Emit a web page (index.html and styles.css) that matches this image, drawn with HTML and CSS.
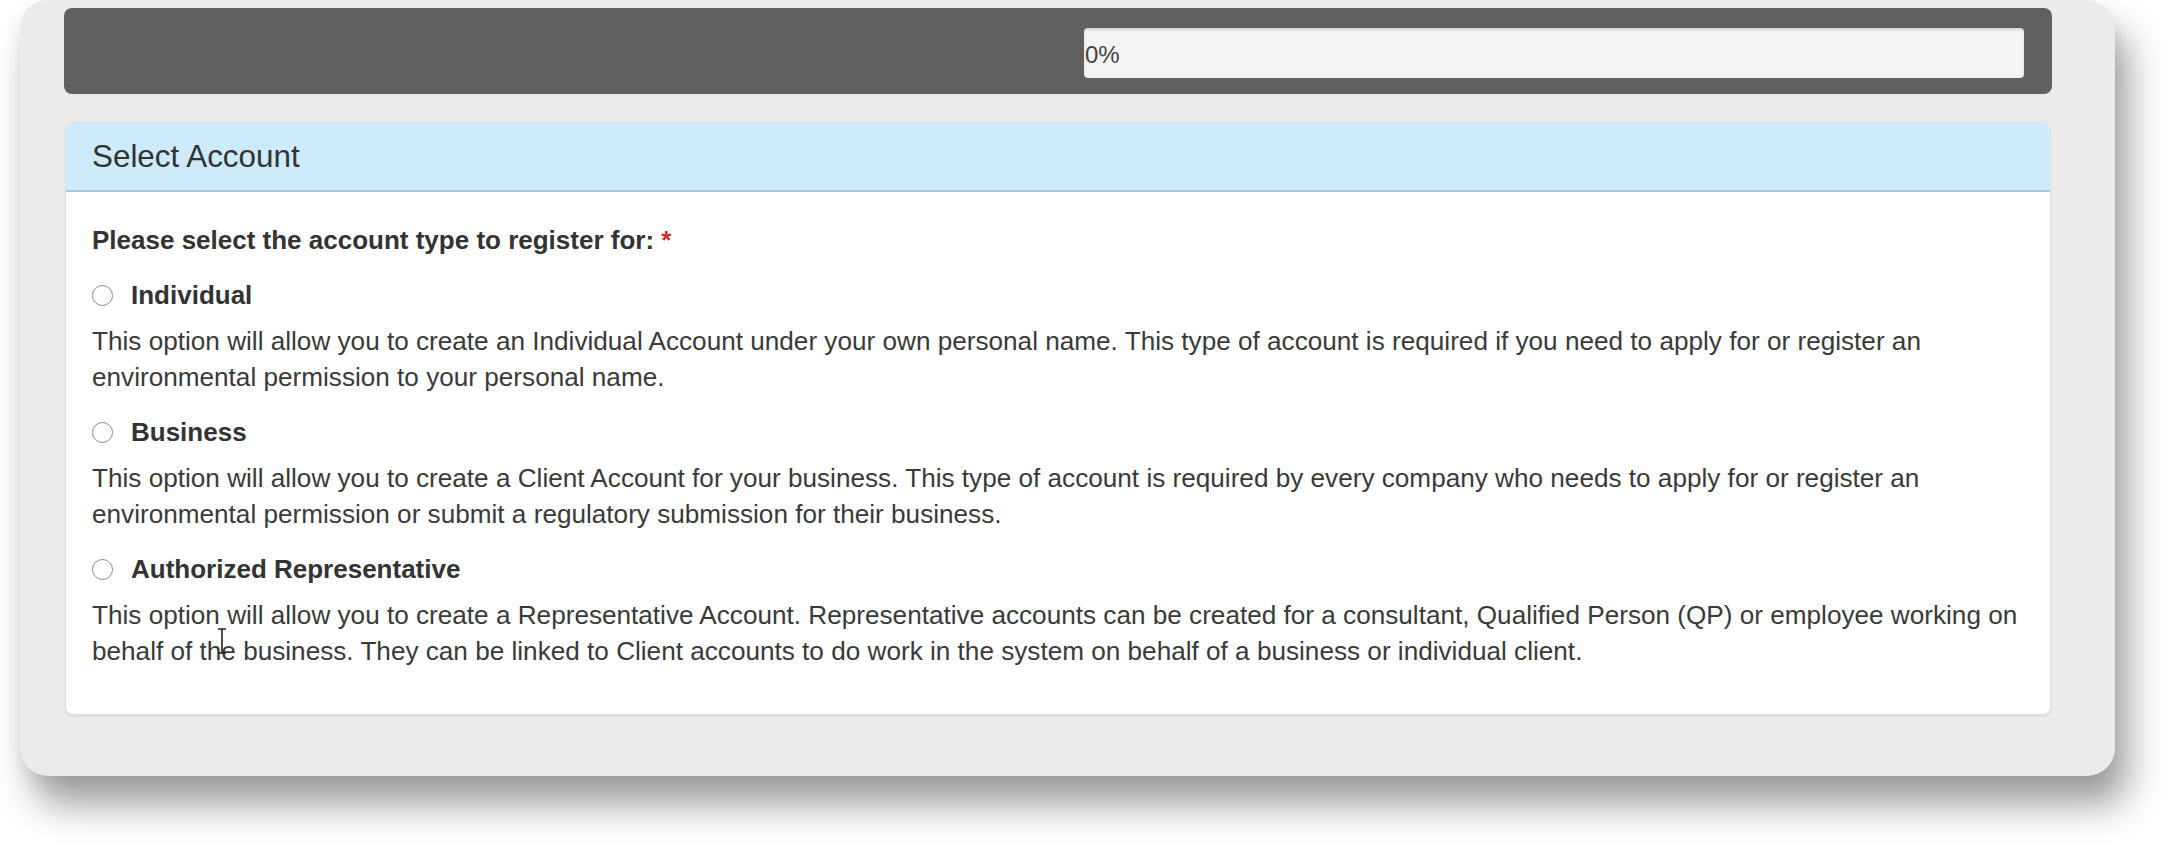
FILE: index.html
```html
<!DOCTYPE html>
<html lang="en">
<head>
<meta charset="utf-8">
<title>Select Account</title>
<link rel="stylesheet" href="styles.css">
</head>
<body>
<div class="page">
<div class="screen">
  <div class="topbar">
    <div class="progress"><span class="progress-label">0%</span></div>
  </div>
  <div class="panel">
    <div class="panel-heading">Select Account</div>
    <div class="panel-body">
      <div class="question">Please select the account type to register for: <span class="req">*</span></div>
      <div class="option">
        <label class="radio-row"><span class="radio"></span><span class="radio-label">Individual</span></label>
        <p class="desc">This option will allow you to create an Individual Account under your own personal name. This type of account is required if you need to apply for or register an environmental permission to your personal name.</p>
      </div>
      <div class="option">
        <label class="radio-row"><span class="radio"></span><span class="radio-label">Business</span></label>
        <p class="desc">This option will allow you to create a Client Account for your business. This type of account is required by every company who needs to apply for or register an environmental permission or submit a regulatory submission for their business.</p>
      </div>
      <div class="option">
        <label class="radio-row"><span class="radio"></span><span class="radio-label">Authorized Representative</span></label>
        <p class="desc">This option will allow you to create a Representative Account. Representative accounts can be created for a consultant, Qualified Person (QP) or employee working on behalf of the business. They can be linked to Client accounts to do work in the system on behalf of a business or individual client.</p>
      </div>
      <svg class="cursor" width="12" height="26" viewBox="0 0 12 26"><path d="M2 1h8M6 1v24M2 25h8" stroke="#222" stroke-width="1.6" fill="none"/></svg>
    </div>
  </div>
</div>
</div>
</body>
</html>
```
FILE: styles.css
```css
html, body {
  margin: 0;
  padding: 0;
  background: #ffffff;
  font-family: "Liberation Sans", Arial, sans-serif;
  color: #333333;
}
.page {
  height: 856px;
  overflow: hidden;
  background: #ffffff;
}
.screen {
  margin-left: 20px;
  width: 2095px;
  height: 776px;
  box-sizing: border-box;
  padding: 8px 63px 0 44px;
  background: #ebebeb;
  border-radius: 28px;
  box-shadow: 14px 30px 36px rgba(0, 0, 0, 0.36), -2px 8px 18px rgba(0, 0, 0, 0.07);
  display: flex;
  flex-direction: column;
  gap: 28px;
}
.topbar {
  height: 86px;
  background: #606060;
  border-radius: 8px;
  display: flex;
  justify-content: flex-end;
  align-items: flex-start;
  padding: 20px 28px 0 0;
  box-sizing: border-box;
}
.progress {
  width: 940px;
  height: 50px;
  background: #f4f4f4;
  border-radius: 4px;
  box-shadow: inset 0 2px 3px rgba(0, 0, 0, 0.12);
  display: flex;
  align-items: center;
  padding-top: 3px;
  box-sizing: border-box;
}
.progress-label {
  font-size: 24px;
  color: #444;
  padding-left: 1px;
}
.panel {
  margin-left: 1px;
  width: 1986px;
  background: #ffffff;
  border: 1px solid #d6e3ea;
  border-radius: 8px;
  box-shadow: 0 2px 2px rgba(0, 0, 0, 0.06);
  box-sizing: border-box;
}
.panel-heading {
  height: 69px;
  box-sizing: border-box;
  background: #cdebfa;
  border-bottom: 2px solid #a9c6d6;
  border-radius: 7px 7px 0 0;
  padding: 0 26px;
  display: flex;
  align-items: center;
  font-size: 31.4px;
  color: #333;
}
.panel-body {
  position: relative;
  padding: 30px 26px 45px 26px;
}
.question {
  font-weight: bold;
  font-size: 26px;
  line-height: 36px;
}
.req {
  color: #c9302c;
}
.option {
  margin-top: 19px;
}
.radio-row {
  display: flex;
  align-items: center;
  height: 36px;
  gap: 18px;
}
.radio {
  width: 21px;
  height: 21px;
  border: 1.5px solid #8a8a8a;
  border-radius: 50%;
  box-sizing: border-box;
  background: #fff;
}
.radio-label {
  font-weight: bold;
  font-size: 26px;
}
.desc {
  margin: 10px 0 0 0;
  font-size: 26.15px;
  line-height: 36px;
  color: #3a3a3a;
}
.cursor {
  position: absolute;
  left: 150px;
  top: 436px;
}
```
